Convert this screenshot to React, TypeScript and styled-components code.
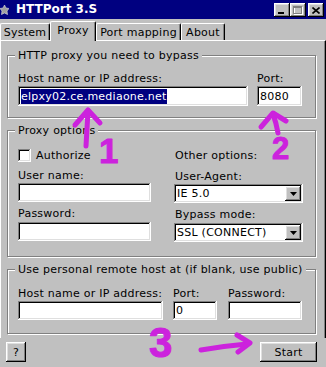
import React from "react";
import styled, { createGlobalStyle } from "styled-components";

const uiFont = `"DejaVu Sans", Verdana, sans-serif`;

const GlobalStyle = createGlobalStyle`
  html, body {
    margin: 0;
    padding: 0;
    background: #c0c0c0;
  }
  * {
    box-sizing: border-box;
  }
`;

const raised = `
  box-shadow: inset -1px -1px 0 #000, inset 1px 1px 0 #fff,
    inset -2px -2px 0 #808080, inset 2px 2px 0 #dfdfdf;
`;

const sunken = `
  box-shadow: inset -1px -1px 0 #fff, inset 1px 1px 0 #808080,
    inset -2px -2px 0 #dfdfdf, inset 2px 2px 0 #000;
`;

export default function App() {
  return (
    <>
      <GlobalStyle />
      <Window>
        <TitleBar>
          <AppIcon width="9" height="10" viewBox="0 0 9 10">
            <polygon
              points="4.5,0 6,3 9,3.5 7,6 7.5,9.5 4.5,8 1.5,9.5 2,6 0,3.5 3,3"
              fill="#a0a0a0"
              stroke="#e0e0e0"
              strokeWidth="0.6"
            />
          </AppIcon>
          <Title>HTTPort 3.S</Title>
          <Caps>
            <CapButton>
              <svg width="8" height="7" viewBox="0 0 8 7">
                <rect x="0" y="5" width="6" height="2" fill="#000" />
              </svg>
            </CapButton>
            <CapButton>
              <svg width="10" height="9" viewBox="0 0 10 9">
                <rect x="1.5" y="1.5" width="8" height="7" fill="none" stroke="#fff" />
                <rect x="0.5" y="0.5" width="8" height="7" fill="none" stroke="#808080" />
                <rect x="0.5" y="0.5" width="8" height="1.5" fill="#808080" />
              </svg>
            </CapButton>
            <CapButton $gap>
              <svg width="8" height="7" viewBox="0 0 8 7">
                <path d="M0.5 0.5 L7.5 6.5 M7.5 0.5 L0.5 6.5" stroke="#000" strokeWidth="1.6" />
              </svg>
            </CapButton>
          </Caps>
        </TitleBar>

        <TabStrip>
          <Tab $w={50}>System</Tab>
          <Tab $w={46} $active>Proxy</Tab>
          <Tab $w={85}>Port mapping</Tab>
          <Tab $w={44}>About</Tab>
        </TabStrip>

        <Panel>
          <Group $pad="10px 13px 11px 10px">
            <Legend>HTTP proxy you need to bypass</Legend>
            <Row $gap={9}>
              <Field $w={230}>
                <Label>Host name or IP address:</Label>
                <TextBox $h={20}>
                  <Selected>elpxy02.ce.mediaone.net</Selected>
                </TextBox>
              </Field>
              <Field $w={45}>
                <Label>Port:</Label>
                <TextBox $h={20}>8080</TextBox>
              </Field>
            </Row>
          </Group>

          <Group $pad="12px 12px 14px 10px">
            <Legend>Proxy options</Legend>
            <Row $gap={23}>
              <Field $w={133}>
                <CheckRow>
                  <CheckBox />
                  <span>Authorize</span>
                </CheckRow>
                <Label $top={7}>User name:</Label>
                <TextBox $h={19} />
                <Label $top={5}>Password:</Label>
                <TextBox $h={19} $top={1} />
              </Field>
              <Field $w={129}>
                <Label $indent={1}>Other options:</Label>
                <Label $top={7} $indent={1}>User-Agent:</Label>
                <Dropdown value="IE 5.0" />
                <Label $top={5} $indent={1}>Bypass mode:</Label>
                <Dropdown value="SSL (CONNECT)" top={1} />
              </Field>
            </Row>
          </Group>

          <Group $pad="11px 13px 13px 10px">
            <Legend>Use personal remote host at (if blank, use public)</Legend>
            <Row $gap={10}>
              <Field $w={145}>
                <Label>Host name or IP address:</Label>
                <TextBox $h={19} />
              </Field>
              <Field $w={44} style={{ marginRight: 1 }}>
                <Label>Port:</Label>
                <TextBox $h={19}>0</TextBox>
              </Field>
              <Field $w={74}>
                <Label>Password:</Label>
                <TextBox $h={19} />
              </Field>
            </Row>
          </Group>
        </Panel>

        <Footer>
          <Button $w={20}>?</Button>
          <Button $w={57}>Start</Button>
        </Footer>

        <Marks width="326" height="367" viewBox="0 0 326 367">
          <g fill="none" stroke="#cc22dd" strokeWidth="5" strokeLinecap="round" strokeLinejoin="round">
            <path d="M86 146 Q87 128 88 111" />
            <path d="M75 125 L88 110 L100 123" />
            <path d="M278 133 Q276 122 273 114" />
            <path d="M261 127 L273 113 L286 121" />
            <path d="M201 350 Q224 346 247 344" />
            <path d="M237 335 L250 343 L238 352" />
          </g>
          <g fill="#cc22dd" stroke="#cc22dd" strokeWidth="1" strokeLinejoin="round">
            <NumberMark x="99" y="163" fontSize="35">1</NumberMark>
            <NumberMark x="272" y="159" fontSize="31">2</NumberMark>
            <NumberMark x="149" y="357" fontSize="42">3</NumberMark>
          </g>
        </Marks>
      </Window>
    </>
  );
}

function Dropdown({ value, top = 0 }: { value: string; top?: number }) {
  return (
    <SelectBox $top={top}>
      <SelectText>{value}</SelectText>
      <DropButton>
        <svg width="7" height="4" viewBox="0 0 7 4">
          <polygon points="0,0 7,0 3.5,4" fill="#000" />
        </svg>
      </DropButton>
    </SelectBox>
  );
}

const Window = styled.div`
  position: relative;
  width: 326px;
  height: 367px;
  background: #c0c0c0;
  color: #000;
  font-family: ${uiFont};
  font-size: 11px;
  line-height: 13px;
  letter-spacing: 0.25px;
  overflow: hidden;
  display: flex;
  flex-direction: column;
`;

const TitleBar = styled.div`
  flex: none;
  height: 19px;
  background: #000080;
  color: #fff;
  display: flex;
  align-items: center;
`;

const AppIcon = styled.svg`
  flex: none;
`;

const Title = styled.span`
  margin-left: 7px;
  font-weight: bold;
  font-size: 12px;
  letter-spacing: 0;
`;

const Caps = styled.div`
  margin-left: auto;
  margin-right: 2px;
  display: flex;
`;

const CapButton = styled.div<{ $gap?: boolean }>`
  width: 16px;
  height: 14px;
  margin-left: ${(p) => (p.$gap ? 2 : 0)}px;
  background: #c0c0c0;
  ${raised}
  display: flex;
  align-items: center;
  justify-content: center;
  padding-top: 1px;
`;

const TabStrip = styled.div`
  flex: none;
  height: 21px;
  display: flex;
  align-items: flex-end;
  position: relative;
  z-index: 2;
`;

const Tab = styled.div<{ $w: number; $active?: boolean }>`
  width: ${(p) => p.$w}px;
  height: ${(p) => (p.$active ? 20 : 17)}px;
  margin-bottom: ${(p) => (p.$active ? -1 : 0)}px;
  background: #c0c0c0;
  border-top: 1px solid #fff;
  border-left: 1px solid #fff;
  border-right: 1px solid #000;
  border-radius: 2px 2px 0 0;
  box-shadow: inset -1px 0 0 #808080;
  display: flex;
  align-items: center;
  justify-content: center;
  padding-bottom: ${(p) => (p.$active ? 3 : 0)}px;
  white-space: nowrap;
`;

const Panel = styled.div`
  flex: none;
  height: 298px;
  border-top: 1px solid #fff;
  border-left: 1px solid #fff;
  border-right: 1px solid #000;
  box-shadow: inset -1px 0 0 #808080;
  padding: 8px 0 0 6px;
  display: flex;
  flex-direction: column;
  gap: 6px;
`;

const Group = styled.fieldset<{ $pad: string }>`
  margin: 0;
  min-width: 0;
  width: 309px;
  padding: ${(p) => p.$pad};
  border: 1px solid #808080;
  box-shadow: 1px 1px 0 #fff, inset 1px 1px 0 #fff;
`;

const Legend = styled.legend`
  margin-left: -3px;
  padding: 0 3px;
  height: 13px;
  line-height: 13px;
  background: #c0c0c0;
  white-space: nowrap;
`;

const Row = styled.div<{ $gap: number }>`
  display: flex;
  gap: ${(p) => p.$gap}px;
`;

const Field = styled.div<{ $w: number }>`
  width: ${(p) => p.$w}px;
  display: flex;
  flex-direction: column;
`;

const Label = styled.div<{ $top?: number; $indent?: number }>`
  height: 13px;
  margin-top: ${(p) => p.$top ?? 0}px;
  margin-bottom: 1px;
  padding-left: ${(p) => p.$indent ?? 0}px;
  white-space: nowrap;
`;

const TextBox = styled.div<{ $h: number; $top?: number }>`
  height: ${(p) => p.$h}px;
  margin-top: ${(p) => p.$top ?? 0}px;
  background: #fff;
  ${sunken}
  padding: 0 3px;
  display: flex;
  align-items: center;
  white-space: nowrap;
  overflow: hidden;
`;

const Selected = styled.span`
  background: #000080;
  color: #fff;
  line-height: 15px;
`;

const CheckRow = styled.label`
  height: 13px;
  display: flex;
  align-items: center;
  gap: 5px;
`;

const CheckBox = styled.span`
  flex: none;
  width: 13px;
  height: 13px;
  background: #fff;
  ${sunken}
`;

const SelectBox = styled.div<{ $top: number }>`
  height: 19px;
  margin-top: ${(p) => p.$top}px;
  background: #fff;
  ${sunken}
  padding: 2px 2px 2px 3px;
  display: flex;
  align-items: center;
`;

const SelectText = styled.span`
  flex: 1;
  white-space: nowrap;
  overflow: hidden;
`;

const DropButton = styled.span`
  flex: none;
  width: 16px;
  height: 15px;
  background: #c0c0c0;
  ${raised}
  display: flex;
  align-items: center;
  justify-content: center;
`;

const Footer = styled.div`
  flex: none;
  display: flex;
  justify-content: space-between;
  padding: 4px 9px 0 6px;
`;

const Button = styled.div<{ $w: number }>`
  width: ${(p) => p.$w}px;
  height: 20px;
  background: #c0c0c0;
  ${raised}
  display: flex;
  align-items: center;
  justify-content: center;
`;

const Marks = styled.svg`
  position: absolute;
  left: 0;
  top: 0;
  pointer-events: none;
  z-index: 5;
`;

const NumberMark = styled.text`
  font-family: "Liberation Sans", Arial, sans-serif;
  font-weight: bold;
`;
